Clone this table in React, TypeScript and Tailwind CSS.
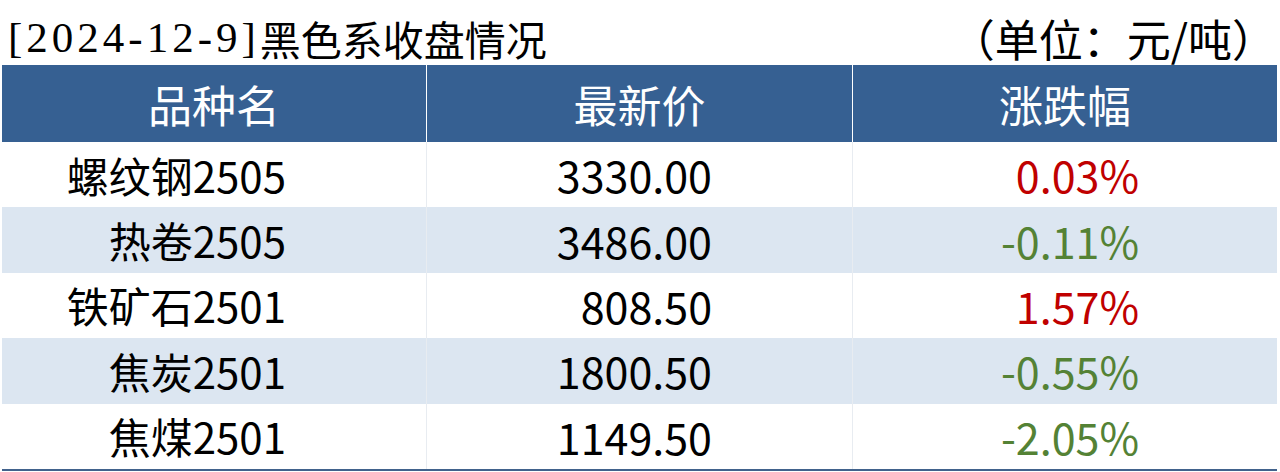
import React from "react";

type Row = {
  name: string;
  price: string;
  change: string;
};

const rows: Row[] = [
  { name: "螺纹钢2505", price: "3330.00", change: "0.03%" },
  { name: "热卷2505", price: "3486.00", change: "-0.11%" },
  { name: "铁矿石2501", price: "808.50", change: "1.57%" },
  { name: "焦炭2501", price: "1800.50", change: "-0.55%" },
  { name: "焦煤2501", price: "1149.50", change: "-2.05%" },
];

const sans = { fontFamily: '"Noto Sans CJK SC", "Noto Sans", sans-serif' };
const serif = { fontFamily: '"Liberation Serif", "Noto Sans CJK SC", serif' };

export default function App() {
  return (
    <div className="w-[1280px] h-[472px] bg-white overflow-hidden" style={sans}>
      {/* title */}
      <div className="h-[65px] flex items-end justify-between pl-[8px] pr-[4px] text-black">
        <div className="leading-none pb-[6px] flex items-end">
          <span className="text-[43px] tracking-[4px]" style={serif}>[2024-12-9]</span>
          <span className="text-[41px]">黑色系收盘情况</span>
        </div>
        <div className="text-[44px] leading-none pb-[5px]">（单位：元/吨）</div>
      </div>

      <div className="ml-[2px] w-[1275px]">
        {/* header */}
        <div className="h-[77px] bg-[#366092] flex text-white text-[44px]">
          <div className="w-[424px] flex items-center justify-center">品种名</div>
          <div className="w-[426px] flex items-center justify-center border-l border-white">最新价</div>
          <div className="flex-1 flex items-center justify-center border-l border-white">涨跌幅</div>
        </div>

        {/* rows */}
        {rows.map((r, i) => (
          <div
            key={r.name}
            className={`h-[65.4px] flex text-[43px] leading-none ${i % 2 === 1 ? "bg-[#dce6f1]" : "bg-white"}`}
          >
            <div className="w-[424px] flex items-center justify-end pr-[140px] text-black text-[42px]">{r.name}</div>
            <div className="w-[426px] flex items-center justify-end pr-[140px] text-black border-l border-[#e8ecf1]">
              {r.price}
            </div>
            <div
              className={`flex-1 flex items-center justify-end pr-[138px] border-l border-[#e8ecf1] ${
                r.change.startsWith("-") ? "text-[#548235]" : "text-[#c00000]"
              }`}
            >
              {r.change}
            </div>
          </div>
        ))}
        <div className="h-[2px] bg-[#41628c]" />
      </div>
    </div>
  );
}
